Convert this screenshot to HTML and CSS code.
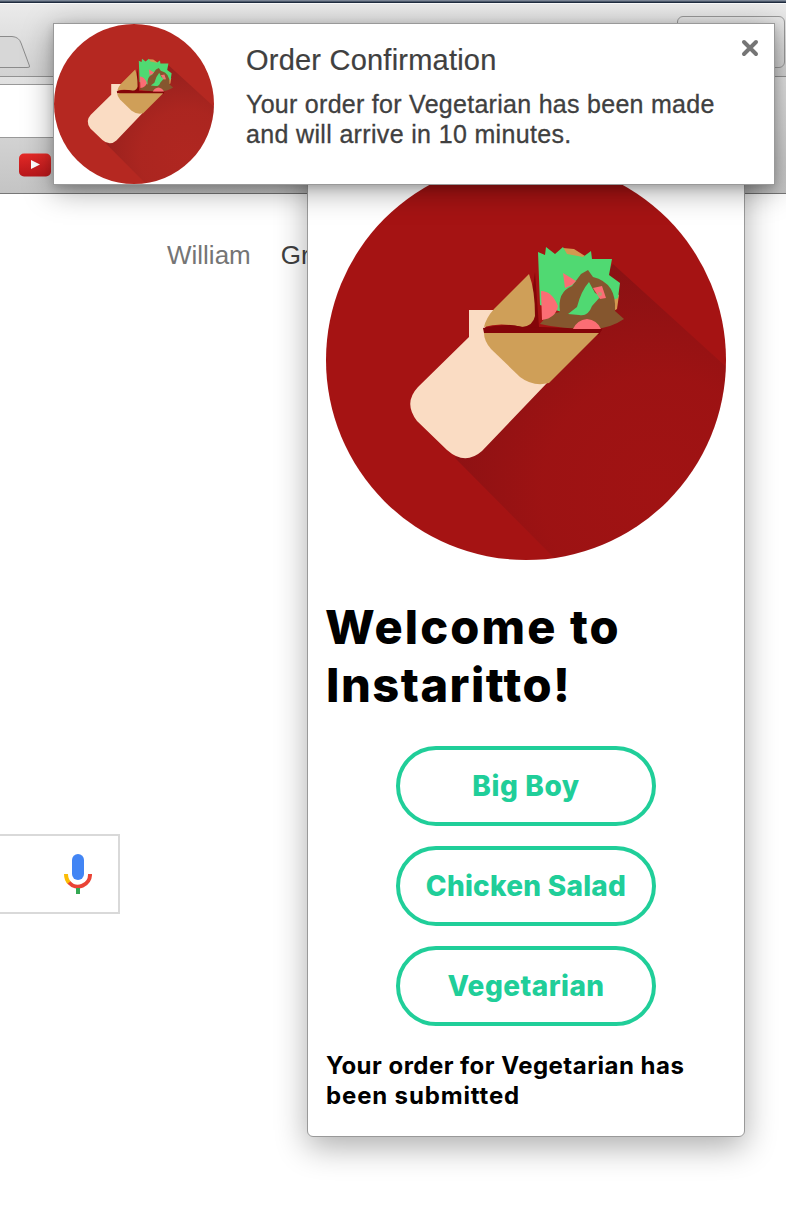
FILE: index.html
```html
<!DOCTYPE html>
<html lang="en">
<head>
<meta charset="utf-8">
<title>Instaritto</title>
<link rel="stylesheet" href="styles.css">
</head>
<body>
<svg class="defs" width="0" height="0" aria-hidden="true">
  <defs>
    <radialGradient id="cast" gradientUnits="userSpaceOnUse" cx="330" cy="330" r="230">
      <stop offset="0" stop-color="#4a0d14" stop-opacity=".05"/>
      <stop offset=".5" stop-color="#4a0d14" stop-opacity=".09"/>
      <stop offset="1" stop-color="#4a0d14" stop-opacity=".3"/>
    </radialGradient>
    <clipPath id="disc"><circle cx="200" cy="200" r="200"/></clipPath>
    <symbol id="burrito" viewBox="0 0 400 400">
      <circle cx="200" cy="200" r="200" fill="currentColor"/>
      <path d="M287 104 L420 225 V420 H250 L129 298 Z" fill="url(#cast)" clip-path="url(#disc)"/>
      <path d="M157 168 L202 163 L209 112 L213 167 L276 169 L273 175 L158 175 Z" fill="#840509"/>
      <path d="M143 150 H168 L158 170 L221 223 L156 291 Q139 306 121 290 L91 261 Q77 243 92 227 L143 177 Z" fill="#fadcc3"/>
      <path d="M203 114 Q209 130 209 156 Q207 166 196 167 Q174 162 158 167 Q160 158 168 149 Z" fill="#cf9f58"/>
      <path d="M157 168 Q178 163 197 167 L276 170 L272 174 L158 173 Z" fill="#840509"/>
      <path d="M158 173 H273 L223 223 Q207 227 194 217 L165 189 Q158 181 158 173 Z" fill="#cf9f58"/>
      <path d="M237 88 L248 89 L259 96 L252 101 L240 99 Z M289 133 L293 135 L291 149 L286 152 Z" fill="#d39950"/>
      <path d="M212 92 L219 95 L220 87 L229 94 L237 87 L241 94 L257 97 L265 91 L266 99 L286 99 L283 115 L294 123 L292 138 L287 140 L276 150 L245 155 L214 145 Z" fill="#50d972"/>
      <path d="M214 164 Q222 153 234 152 Q231 132 246 126 L255 114 L262 110 L267 117 Q291 123 289 151 L298 159 Q285 168 268 169 Q235 169 214 164 Z" fill="#85562e"/>
      <path d="M263 122 L269 133 L275 136 L266 146 Q262 157 253 155 L242 154 L251 147 Q255 131 263 122 Z" fill="#50d972"/>
      <path d="M215 131 Q226 131 232 146 Q230 158 216 160 Z M237 113 L250 121 L246 125 L239 128 Z M247 169 Q251 160 261 159 Q271 160 275 169 Z M267 128 L276 126 L280 138 L274 139 Z" fill="#fb6d74"/>
      <circle cx="274" cy="134" r="2" fill="#b89c70"/>
    </symbol>
  </defs>
</svg>

<div class="screen">
  <header class="browser">
    <div class="desktop-edge"></div>
    <div class="tabs">
      <svg class="tab" width="32" height="34" viewBox="0 0 32 34">
        <path d="M-2 .5 H12 Q19 1 21 7 L29.5 30 Q30.500 31.500 27 31.500 H-2 Z" fill="#d7d7d7" stroke="#8b8b8b"/>
      </svg>
      <div class="profile"></div>
    </div>
    <div class="toolbar"><div class="address"></div></div>
    <div class="bookmarks">
      <svg width="32" height="24" viewBox="0 0 32 24">
        <defs><linearGradient id="tube" x2="0" y2="1"><stop stop-color="#e52a27"/><stop offset="1" stop-color="#b8171b"/></linearGradient></defs>
        <rect y=".5" width="32" height="23" rx="5" fill="url(#tube)"/>
        <path d="M12 7 L21 11.500 L12 16 Z" fill="#fff"/>
      </svg>
    </div>
  </header>

  <main class="page">
    <nav class="links"><span class="user">William</span><span class="gmail">Gr</span></nav>
    <div class="search">
      <svg width="28" height="40" viewBox="0 0 28 40">
        <rect x="8" y="0" width="12" height="26" rx="6" fill="#4285f4"/>
        <path d="M2 20 Q2 26 5.500 29" fill="none" stroke="#fbbc05" stroke-width="4"/>
        <path d="M5 28.500 A12 12 0 0 0 26 20" fill="none" stroke="#ea4335" stroke-width="4"/>
        <path d="M12 34 H16 V40 H12 Z" fill="#34a853"/>
      </svg>
    </div>
  </main>

  <section class="popup">
    <svg class="logo" width="400" height="400"><use href="#burrito"/></svg>
    <h1 class="title"><span class="t1">Welcome to</span><br><span class="t2">Instaritto!</span></h1>
    <div class="choices">
      <button class="choice"><span class="c1">Big Boy</span></button>
      <button class="choice"><span class="c2">Chicken Salad</span></button>
      <button class="choice"><span class="c3">Vegetarian</span></button>
    </div>
    <p class="status"><span class="s1">Your order for Vegetarian has</span><br><span class="s2">been submitted</span></p>
  </section>

  <aside class="toast">
    <svg class="toast-icon" width="160" height="160"><use href="#burrito"/></svg>
    <div class="toast-body">
      <h2 class="toast-title">Order Confirmation</h2>
      <p class="toast-text"><span class="m1">Your order for Vegetarian has been made</span><br><span class="m2">and will arrive in 10 minutes.</span></p>
    </div>
    <svg class="close" width="18" height="18" viewBox="0 0 18 18"><path d="M3 3 L15 15 M15 3 L3 15" stroke="#757575" stroke-width="4" stroke-linecap="round"/></svg>
  </aside>
</div>
</body>
</html>
```
FILE: styles.css
```css
* { box-sizing: border-box; }
body { margin: 0; background: #fff; font-family: "Liberation Sans", Arial, sans-serif; }
h1, h2, p { margin: 0; }
span { white-space: nowrap; }
.defs { position: absolute; }
.screen { position: relative; width: 786px; height: 1232px; overflow: hidden; }

.browser { height: 194px; display: flex; flex-direction: column; background: linear-gradient(#ececec, #d2d2d2 76px, #e2e2e2 77px, #c4c4c4); border-bottom: 1px solid #777; }
.desktop-edge { height: 4px; background: linear-gradient(#7a8595 1px, #1f2c3f 2px, #1f2c3f 3px, #fafafa 3px); }
.tabs { height: 73px; display: flex; justify-content: space-between; align-items: flex-start; border-bottom: 1px solid #929292; }
.tab { margin-top: 32px; }
.profile { width: 108px; height: 52px; margin: 12px 1px 0 0; border: 1px solid #999; border-radius: 6px; }
.toolbar { height: 61px; padding-top: 7px; }
.address { width: 240px; height: 54px; background: #fff; border: solid #999; border-width: 1px 0; }
.bookmarks { flex: 1; padding: 15px 0 0 19px; }

.page { display: flex; flex-direction: column; align-items: flex-start; }
.links { margin: 46px 0 0 167px; display: flex; gap: 31px; font-size: 26px; line-height: 30px; color: #757575; }
.gmail { color: #404040; margin-left: -1px; }
.search { margin-top: 564px; width: 120px; height: 80px; border: 2px solid #d9d9d9; border-left: 0; display: flex; justify-content: flex-end; align-items: center; padding-right: 26px; }

.popup { position: absolute; left: 307px; top: 141px; width: 438px; height: 996px; padding: 18px; background: #fff; border: 1px solid #999; border-radius: 6px; box-shadow: 0 10px 32px rgba(0, 0, 0, .32); }
.logo { display: block; color: #a51313; }
.title { margin-top: 38px; font: 800 47px/58px Inter, sans-serif; color: #000; }
.t1 { letter-spacing: 2.1px; margin-left: -1px; }
.t2 { letter-spacing: 1.5px; }
.choices { margin-top: 32px; display: flex; flex-direction: column; align-items: center; gap: 20px; }
.choice { width: 260px; height: 80px; padding: 0; border: 4px solid #20ce99; border-radius: 40px; background: #fff; color: #20ce99; font: 800 28px/34px Inter, sans-serif; }
.c1 { letter-spacing: .6px; }
.c2 { letter-spacing: .25px; }
.c3 { letter-spacing: .45px; }
.status { margin-top: 25px; font: 700 24px/30px Inter, sans-serif; color: #000; }
.s1 { letter-spacing: .48px; }
.s2 { letter-spacing: .85px; }

.toast { position: absolute; left: 53px; top: 23px; width: 722px; height: 162px; display: flex; background: #fff; border: 1px solid #999; box-shadow: 0 6px 28px rgba(0, 0, 0, .36), 0 3px 8px rgba(0, 0, 0, .15); }
.toast-icon { color: #b52821; flex: none; }
.toast-body { flex: 1; padding: 20px 0 0 32px; color: #404040; }
.toast-title { font-size: 29px; line-height: 32px; font-weight: 400; letter-spacing: .22px; -webkit-text-stroke: .2px #404040; }
.toast-text { margin-top: 13px; font-size: 25px; line-height: 30px; -webkit-text-stroke: .3px #404040; }
.m1 { letter-spacing: .28px; }
.m2 { letter-spacing: .34px; }
.close { margin: 15px 15px 0 0; }
```
